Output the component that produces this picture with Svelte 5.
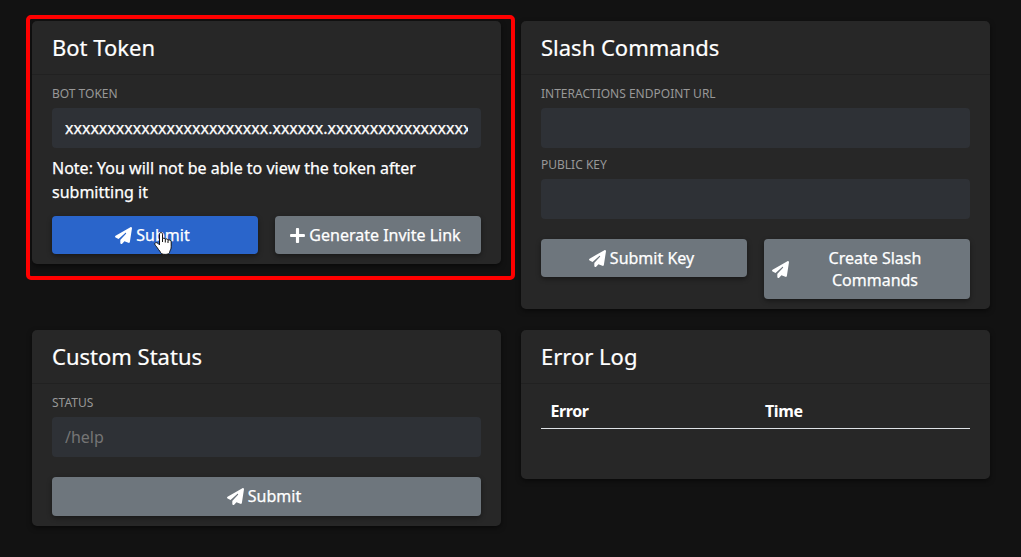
<script>
  const plane = 'M498.1 5.6c10.1 7 15.4 19.1 13.5 31.2l-64 416c-1.5 9.7-7.4 18.2-16 23s-18.9 5.4-28 1.6L284 427.7l-68.5 74.1c-8.9 9.7-22.9 12.9-35.2 8.1S160 493.2 160 480v-83.600c0-4 1.500-7.800 4.200-10.700L331.800 202.800c5.800-6.300 5.600-16-.4-22s-15.700-6.400-22-.7L106 360.800 17.700 316.600C7.100 311.300.3 300.700 0 288.900s5.900-22.800 16.100-28.700l448-256c10.700-6.100 23.900-5.500 34 1.400z';
  const plus = 'M416 208H272V64c0-17.67-14.33-32-32-32h-32c-17.67 0-32 14.33-32 32v144H32c-17.67 0-32 14.33-32 32v32c0 17.67 14.33 32 32 32h144v144c0 17.67 14.33 32 32 32h32c17.67 0 32-14.33 32-32V304h144c17.67 0 32-14.33 32-32v-32c0-17.67-14.33-32-32-32z';
  let token = $state('xxxxxxxxxxxxxxxxxxxxxxxx.xxxxxx.xxxxxxxxxxxxxxxxxxxxxxxxxxx');
</script>

{#snippet button(label, icon = plane, kind = '')}
  <button class="btn {kind}">
    <svg class:plus={icon === plus} viewBox={icon === plus ? '0 0 448 512' : '0 0 512 512'}><path d={icon} /></svg>
    <span>{label}</span>
  </button>
{/snippet}

<main>
  <section class="card">
    <h2>Bot Token</h2>
    <div class="body">
      <label for="token">BOT TOKEN</label>
      <input id="token" bind:value={token} />
      <p>Note: You will not be able to view the token after submitting it</p>
      <div class="actions">
        {@render button('Submit', plane, 'primary')}
        {@render button('Generate Invite Link', plus)}
      </div>
    </div>
    <div class="highlight"></div>
    <svg class="cursor" viewBox="0 0 18 23">
      <path d="M5.500 2.200c0-2.200 3-2.200 3 0v4.600c.6-.9 2.600-.8 2.800.6.7-.9 2.500-.6 2.700.8 1-.8 3.200-.2 3.200 1.600v5c0 2.200-.8 3-1.400 4.600-.3.9-.3 2.100-1.300 2.400-2 .8-4.800.8-6.800 0-1-.4-1-1.500-1.800-2.500-1-1.400-2.100-2.500-3-4.100C2.100 13.900.4 12.700.9 11.400c.5-1.200 2.100-.9 3.100 0l1.500 1.500z" />
      <path class="fingers" d="M8.500 6.500V10M11.300 7.400V10.500M14 8.300V11" />
    </svg>
  </section>

  <section class="card">
    <h2>Slash Commands</h2>
    <div class="body">
      <label for="endpoint">INTERACTIONS ENDPOINT URL</label>
      <input id="endpoint" />
      <label class="next" for="key">PUBLIC KEY</label>
      <input id="key" />
      <div class="actions spaced">
        {@render button('Submit Key')}
        {@render button('Create Slash Commands', plane, 'tall')}
      </div>
    </div>
  </section>

  <section class="card">
    <h2>Custom Status</h2>
    <div class="body">
      <label for="status">STATUS</label>
      <input id="status" placeholder="/help" />
      <div class="actions single">
        {@render button('Submit', plane, 'wide')}
      </div>
    </div>
  </section>

  <section class="card log">
    <h2>Error Log</h2>
    <div class="body">
      <div class="thead"><span>Error</span><span>Time</span></div>
    </div>
  </section>
</main>

<style>
  :global(body) { margin: 0; background: #121212; overflow: hidden; }
  main {
    box-sizing: border-box;
    height: 557px;
    padding: 21px 31px 0 32px;
    display: grid;
    grid-template-columns: 469px 469px;
    gap: 21px 20px;
    align-items: start;
    align-content: start;
    font-family: "Noto Sans", sans-serif;
    font-size: 16px;
    line-height: 24px;
    color: #fff;
  }
  .card {
    position: relative;
    background: #272727;
    border-radius: 5px;
    box-shadow: 0 2px 5px rgba(0, 0, 0, .5);
  }
  h2 {
    box-sizing: border-box;
    height: 54px;
    margin: 0;
    padding: 11px 20px 0;
    border-bottom: 1px solid #212121;
    font-size: 22px;
    font-weight: 400;
    line-height: 30px;
    -webkit-text-stroke: .2px;
  }
  .body { padding: 10px 20px; }
  label { display: block; height: 23px; font-size: 12px; line-height: 18px; color: #989898; }
  .next { margin-top: 8px; }
  input {
    box-sizing: border-box;
    display: block;
    width: 100%;
    height: 40px;
    padding: 0 13px;
    border: 0;
    border-radius: 4px;
    outline: 0;
    background: #2e3136;
    color: #fff;
    font: inherit;
  }
  input::placeholder { color: #757575; opacity: 1; }
  #token, p, .btn span { -webkit-text-stroke: .25px; }
  p { margin: 8px 0 12px; }
  .actions { display: grid; grid-template-columns: 206px 206px; gap: 17px; align-items: start; }
  .spaced { margin-top: 20px; }
  .single { margin-top: 20px; grid-template-columns: 1fr; }
  .btn {
    display: flex;
    align-items: center;
    justify-content: center;
    gap: 4px;
    height: 38px;
    padding: 0 13px 0 8px;
    border: 0;
    border-radius: 4px;
    background: #6e767d;
    box-shadow: 0 2px 5px rgba(0, 0, 0, .4);
    color: #fff;
    font: inherit;
    line-height: 22px;
  }
  .btn svg { flex: none; width: 17px; height: 17px; fill: #fff; }
  .btn svg.plus { width: 15px; height: 17px; }
  .primary { background: #2a65cb; }
  .tall { height: 60px; }
  .tall span { flex: 1; }
  .wide { height: 39px; padding-bottom: 1px; }
  .log { height: 149px; }
  .thead {
    display: grid;
    grid-template-columns: 1fr 1fr;
    height: 34px;
    border-bottom: 1px solid #dee2e6;
    font-weight: 700;
    line-height: 34px;
    letter-spacing: -.4px;
  }
  .thead span { padding-left: 9.5px; }
  .highlight {
    position: absolute;
    left: -6px;
    top: -6px;
    box-sizing: border-box;
    width: 489px;
    height: 265px;
    border: 4px solid #f00;
    border-radius: 5px;
  }
  .cursor { position: absolute; left: 122px; top: 211px; width: 18px; height: 23px; fill: #fff; stroke: #111; stroke-width: 1; }
  .fingers { fill: none; }
</style>
